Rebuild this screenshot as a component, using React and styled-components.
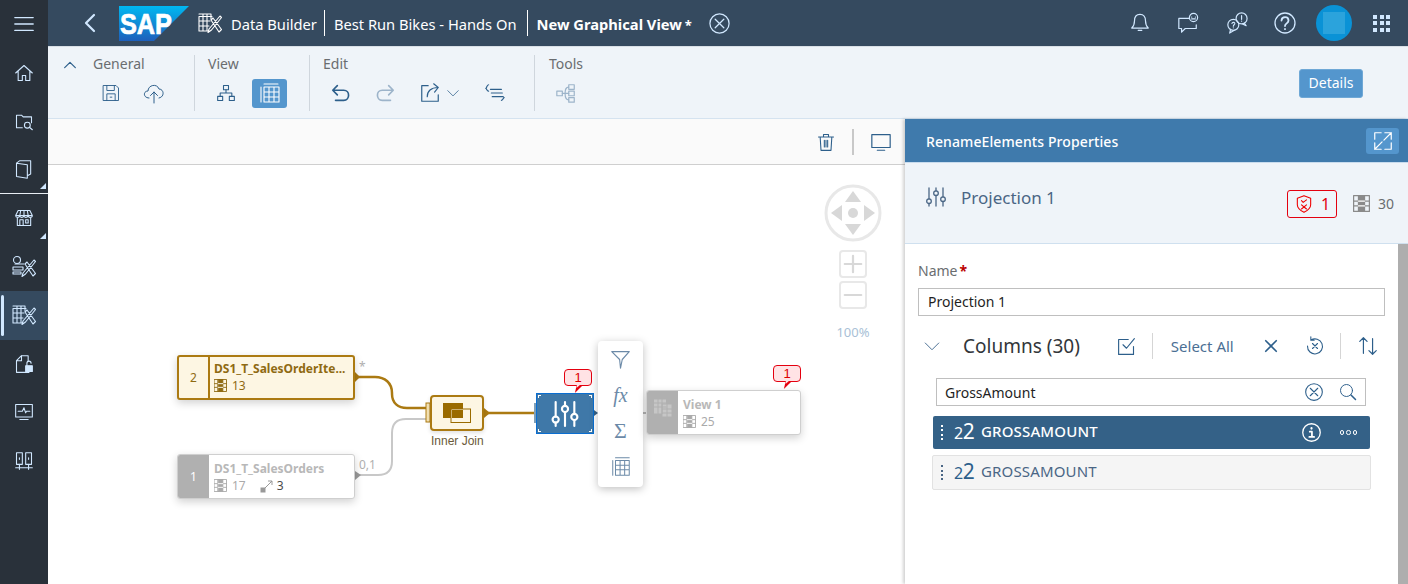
import React from 'react';
import styled, { createGlobalStyle } from 'styled-components';

const GlobalStyle = createGlobalStyle`
  html, body { margin: 0; padding: 0; height: 100%; overflow: hidden; }
  body { font-family: "Noto Sans", "Open Sans", sans-serif; background: #fff; }
  * { box-sizing: border-box; }
`;

const Svg = styled.svg`
  display: block;
  flex: none;
  width: ${(p) => p.$s || 20}px;
  height: ${(p) => p.$s || 20}px;
  fill: none;
  stroke: ${(p) => p.$c || 'currentColor'};
  stroke-width: ${(p) => p.$w || 1.3};
  stroke-linecap: round;
  stroke-linejoin: round;
`;

const I = ({ s, c, w, children }) => (
  <Svg viewBox="0 0 24 24" $s={s} $c={c} $w={w}>
    {children}
  </Svg>
);

const Film = ({ s = 14, c = '#7f7f7f' }) => (
  <Svg viewBox="0 0 14 14" $s={s} $c={c} $w={1}>
    <rect x="0.5" y="0.5" width="13" height="13" />
    <rect x="4.5" y="0.5" width="5" height="13" fill={c} />
    <path d="M.5 5H4.5M.5 9H4.5M9.5 5H13.5M9.5 9H13.5" />
    <path d="M4.5 5H9.5M4.5 9H9.5" stroke="#fff" />
  </Svg>
);

const toolsPath = 'M13 9l2-2 8.500 11.500-2.500 2.500zM22 5l1.500 1.500L13.500 19l-3.500 2.500 1-3.500z';

const TableTools = ({ s }) => (
  <I s={s} w={1.100}>
    <path d="M1 3h12M1 5.500h13M1 5.500V20h10M1 10h11M1 15h10M5 3v17M9 3v17M13 3v5" />
    <path d={toolsPath} />
  </I>
);

const Sliders = ({ s, c, w }) => (
  <I s={s} c={c} w={w}>
    <path d="M5 3v11M5 18.500V21M12 3v3M12 10.500V21M19 3v9M19 16.500V21" />
    <circle cx="5" cy="16.200" r="2.300" />
    <circle cx="12" cy="8.200" r="2.300" />
    <circle cx="19" cy="14.200" r="2.300" />
  </I>
);

const CloseCircle = ({ s, c }) => (
  <I s={s} c={c}>
    <circle cx="12" cy="12" r="10" />
    <path d="M7.500 7.500l9 9M16.500 7.500l-9 9" />
  </I>
);

const App = () => (
  <>
    <GlobalStyle />
    <Shell>
      <Sidebar>
        <SideItem><I s={22} w={1.500}><path d="M2 5h20M2 12h20M2 19h20" /></I></SideItem>
        <SideItem><I><path d="M2 12L12 3l10 9M5 10v11h5v-6h4v6h5V10" /></I></SideItem>
        <SideItem><I><path d="M10 20H3V5h6l2 2h10v7" /><circle cx="16" cy="17" r="3.500" /><path d="M18.500 19.500L22 22.500" /></I></SideItem>
        <SideItem $divider $corner>
          <I><path d="M3 5v16l13 2V7zM3 5l4-3h13v16l-4 2" /></I>
        </SideItem>
        <SideItem $corner>
          <I><path d="M5 3h14l3 6H2zM2 9c0 3 4 3 5 0 0 3 4 3 5 0 0 3 4 3 5 0 0 3 5 3 5 0M4 12v9h16v-9M7 14h4v7H7zM14 14h3v4h-3zM8 3L7 9M12 3v6M16 3l1 6" /></I>
        </SideItem>
        <SideItem>
          <I s={24} w={1.100}><circle cx="5" cy="5" r="3.500" /><path d="M1 12h10v3H1zM1 17h8v2H1zM3 9h9" /><path d={toolsPath} /></I>
        </SideItem>
        <SideItem $active><TableTools s={24} /></SideItem>
        <SideItem>
          <I><path d="M9 2h8v7M9 2L3 8v14h15M3 8h6V2" /><rect x="14" y="14" width="8" height="7" fill="#d1e8ff" /><path d="M15.500 14v-3a2.500 2.500 0 0 1 5 0" /></I>
        </SideItem>
        <SideItem>
          <I><rect x="2" y="3" width="20" height="15" /><path d="M5 11h5l2-4 2 6 1-2h4M7 21h10" /></I>
        </SideItem>
        <SideItem>
          <I><rect x="3" y="2" width="7" height="14" /><rect x="14" y="2" width="7" height="14" /><path d="M6.500 16v6M17.500 16v6M2 20h20M6.500 8v2M17.500 8v2" /></I>
        </SideItem>
      </Sidebar>

      <Main>
        <Shellbar>
          <BackBtn><I s={24} w={2.200}><path d="M15 4l-8 8 8 8" /></I></BackBtn>
          <SapLogo viewBox="0 0 70 35">
            <defs>
              <linearGradient id="sapg" x1="0" y1="0" x2="0" y2="1">
                <stop offset="0" stopColor="#00b8f1" />
                <stop offset="1" stopColor="#1e5fbb" />
              </linearGradient>
            </defs>
            <polygon points="0,0 70,0 35,35 0,35" fill="url(#sapg)" />
            <text x="1" y="28" fill="#fff" stroke="#fff" strokeWidth="0.700" fontFamily="Liberation Sans" fontWeight="700" fontSize="29" textLength="52" lengthAdjust="spacingAndGlyphs">SAP</text>
          </SapLogo>
          <Crumbs>
            <TableTools s={24} />
            <Crumb $pad="0 7px 0 9px">Data Builder</Crumb>
            <CrumbBar />
            <Crumb $pad="0 10px 0 9px">Best Run Bikes - Hands On</Crumb>
            <CrumbBar />
            <Crumb $bold $pad="0 0 0 9px">New Graphical View<Star>*</Star></Crumb>
            <CloseSlot><CloseCircle s={23} /></CloseSlot>
          </Crumbs>
          <ShellRight>
            <ShellBtn><I s={22}><path d="M12 2.500c-4 0-6 3-6 7 0 4-1 6-3 8h18c-2-2-3-4-3-8 0-4-2-7-6-7zM10 20h4" /></I></ShellBtn>
            <ShellBtn><I s={22}><path d="M13 7H2v11h3v4l4-4h12v-4" /><circle cx="18" cy="6" r="4.500" /><path d="M16 5.500h.1M20 5.500h.1M16 7.500h4" /></I></ShellBtn>
            <ShellBtn>
              <I s={22}>
                <circle cx="8" cy="14" r="6" />
                <path d="M5 19l-1 4 5-3M6.500 12.500c.5-2 3.500-1.500 3 .5-.3 1-1.500 1-1.500 2.500M8 17.200v.1" />
                <circle cx="17" cy="7" r="6" />
                <path d="M20 12l2 3-4-2M17 4v4M17 10v.1" />
              </I>
            </ShellBtn>
            <ShellBtn><I s={24}><circle cx="12" cy="12" r="10" /><path d="M8.500 9.500c.3-4.500 7-4.500 7 0 0 3-3.500 2.700-3.500 5.500M12 18v.2" strokeWidth="1.800" /></I></ShellBtn>
            <Avatar><AvatarInner /></Avatar>
            <ShellBtn>
              <Dots>{Array.from({ length: 9 }).map((_, i) => <b key={i} />)}</Dots>
            </ShellBtn>
          </ShellRight>
        </Shellbar>

        <Toolbar>
          <Collapse><I s={16} w={1.800} c="#2d5f8b"><path d="M4 16l8-8 8 8" /></I></Collapse>
          <Group $w={147} $pl={45}>
            <GroupLabel>General</GroupLabel>
            <ToolRow>
              <Slot $l={8}><I s={20} w={1.100}><path d="M3 3h15l3 3v15H3zM7 3v6h9V3M7 21v-8h10v8M11 17h2" /></I></Slot>
              <Slot $l={21}><I s={24} w={1}><path d="M7 17c-6 0-6-7-1-7 0-6 9-8 11-2 5 0 6 8 0 9M12 22V11M8.500 14.500L12 11l3.500 3.500" /></I></Slot>
            </ToolRow>
          </Group>
          <Group $w={115}>
            <GroupLabel>View</GroupLabel>
            <ToolRow>
              <Slot $l={8}><I s={20}><rect x="9" y="3" width="6" height="5" /><rect x="2" y="16" width="6" height="5" /><rect x="16" y="16" width="6" height="5" /><path d="M12 8v4M5 16v-4h14v4" /></I></Slot>
              <ActiveTool><I s={24} c="#fff" w={1.100}><path d="M6 3h14M6 6h15v15H6zM11 6v15M16 6v15M6 11h15M6 16h15M3 6v15" /></I></ActiveTool>
            </ToolRow>
          </Group>
          <Group $w={225}>
            <GroupLabel>Edit</GroupLabel>
            <ToolRow>
              <Slot $l={7}><I s={22} w={1.800}><path d="M8 4L3 9l5 5M3 9h12c7 0 7 11 0 11H6" /></I></Slot>
              <Slot $l={22} $muted><I s={22} w={1.800}><path d="M16 4l5 5-5 5M21 9H9c-7 0-7 11 0 11h9" /></I></Slot>
              <Slot $l={23}><I s={22}><path d="M10 4H3v17h18v-7M9 16c0-6 4-10 12-10M16 2l5 4-4 5" /></I></Slot>
              <Slot $l={5}><I s={14}><path d="M3 8l9 9 9-9" /></I></Slot>
              <Slot $l={24}><I s={22}><path d="M7 8h12M8 12h12M9 16h12M5 3C3 3 3 7 2 7c1 0 1 3 3 3M19 20c2 0 2-3 3-3" /></I></Slot>
            </ToolRow>
          </Group>
          <Group $last $pl={14}>
            <GroupLabel>Tools</GroupLabel>
            <ToolRow>
              <Slot $l={6} $muted><I s={22}><rect x="2" y="10" width="6" height="5" /><rect x="15" y="3" width="6" height="5" /><rect x="15" y="10" width="6" height="5" /><rect x="15" y="17" width="6" height="5" /><path d="M8 12.500h7M11 12.500c0-5 1-7 4-7M11 12.500c0 5 1 7 4 7" /></I></Slot>
            </ToolRow>
          </Group>
          <DetailsBtn>Details</DetailsBtn>
        </Toolbar>

        <Work>
          <CanvasCol>
            <CanvasBar>
              <I s={20}><path d="M3 6h18M9 6V3h6v3M5 6l1 16h12l1-16M10 10v8M14 10v8M12 10v8" /></I>
              <BarSep />
              <I s={22}><rect x="2" y="4" width="20" height="14" /><path d="M8 21h8" /></I>
            </CanvasBar>
            <Canvas>
              <Edges viewBox="0 0 854 420">
                <g transform="translate(-48 -165)">
                  <path d="M355 475h23c9 0 14-5 14-14v-28c0-9 5-14 14-14h24" stroke="#c8c8c8" strokeWidth="2" fill="none" />
                  <path d="M355 377h20c10 0 17 6 17 16v1c0 9 6 14 15 14h23" stroke="#ab7a12" strokeWidth="2.500" fill="none" />
                  <path d="M484 413h52" stroke="#ab7a12" strokeWidth="2.500" fill="none" />
                  <path d="M642 413h6" stroke="#bbb" strokeWidth="2" fill="none" />
                  <path d="M355 372l5 5-5 5z" fill="#ab7a12" />
                  <path d="M355 471l6 4-6 5z" fill="#999" />
                  <path d="M484 408l6 5-6 5z" fill="#ab7a12" />
                  <path d="M594 410l4 3-4 3z" fill="#346187" />
                  <rect x="426" y="403" width="4" height="19" fill="#f6e4b5" stroke="#ab7a12" />
                  <rect x="534" y="403" width="2" height="20" fill="#7f9fb8" />
                </g>
              </Edges>

              <EdgeLabel $x={311} $y={195}>*</EdgeLabel>
              <EdgeLabel $x={311} $y={293}>0,1</EdgeLabel>

              <Nav>
                <svg width="60" height="60" viewBox="0 0 60 60">
                  <circle cx="30" cy="30" r="27" fill="#fff" stroke="#e8e8e8" strokeWidth="3" />
                  <circle cx="30" cy="30" r="5" fill="#d8d8d8" />
                  <path d="M30 8l8 11H22zM30 52l-8-11h16zM8 30l11-8v16zM52 30l-11-8v16z" fill="#d8d8d8" />
                </svg>
                <ZoomBtn><I s={22} c="#d8d8d8" w={2.400}><path d="M12 3v18M3 12h18" /></I></ZoomBtn>
                <ZoomBtn><I s={22} c="#d8d8d8" w={2.400}><path d="M3 12h18" /></I></ZoomBtn>
                <ZoomText>100%</ZoomText>
              </Nav>

              <TableNode $x={129} $y={190} $w={178} $on>
                <NodeNum $on>2</NodeNum>
                <NodeBody $on>
                  <NodeTitle $on>DS1_T_SalesOrderIte...</NodeTitle>
                  <NodeMeta $on><Film s={13} c="#8f6a12" />13</NodeMeta>
                </NodeBody>
              </TableNode>

              <TableNode $x={129} $y={289} $w={178}>
                <NodeNum>1</NodeNum>
                <NodeBody>
                  <NodeTitle>DS1_T_SalesOrders</NodeTitle>
                  <NodeMeta>
                    <Film s={13} c="#aaa" />17
                    <LinkIcon>
                      <svg width="14" height="14" viewBox="0 0 14 14" fill="none" stroke="#999">
                        <path d="M3 11L12 2M8 2h4v4" />
                        <rect x="1" y="9" width="4" height="4" fill="#999" />
                      </svg>
                    </LinkIcon>
                    <Dark>3</Dark>
                  </NodeMeta>
                </NodeBody>
              </TableNode>

              <JoinNode>
                <svg width="28" height="20" viewBox="0 0 28 20">
                  <rect x="0" y="0" width="20" height="15" fill="#9a6b00" />
                  <rect x="8" y="6" width="19.500" height="13.500" fill="#fdf6e3" stroke="#9a6b00" />
                  <rect x="9" y="7" width="11" height="8" fill="#9a6b00" />
                </svg>
              </JoinNode>
              <JoinLabel>Inner Join</JoinLabel>

              <ProjectionNode>
                <Sliders s={32} c="#fff" w={1.600} />
                <Tick $t="top:1px;left:1px;border-width:1px 0 0 1px" />
                <Tick $t="top:1px;right:1px;border-width:1px 1px 0 0" />
                <Tick $t="bottom:1px;left:1px;border-width:0 0 1px 1px" />
                <Tick $t="bottom:1px;right:1px;border-width:0 1px 1px 0" />
              </ProjectionNode>
              <Callout $x={516} $y={204}>1</Callout>

              <Popup>
                <I s={21} c="#6c8aa8"><path d="M2 3h20l-8 9-2 10-1-10z" /></I>
                <FxText>fx</FxText>
                <SigmaText>Σ</SigmaText>
                <I s={22} c="#6c8aa8" w={1.100}><path d="M6 2h15M6 5h15v16H6zM11 5v16M16 5v16M6 10h15M6 15h15M3 5v16" /></I>
              </Popup>

              <TableNode $x={598} $y={225} $w={155} $view>
                <NodeNum $view>
                  <svg width="20" height="20" viewBox="0 0 20 20" fill="#c6c6c6" stroke="#b0b0b0">
                    <rect x="0.500" y="2" width="13" height="15" />
                    <rect x="9" y="7" width="10" height="13" />
                    <path d="M.5 6h13M.5 10h13M5 2v15M9 2v15M9 12h10M9 16h10M14 7v13" />
                  </svg>
                </NodeNum>
                <NodeBody $view>
                  <NodeTitle>View 1</NodeTitle>
                  <NodeMeta><Film s={13} c="#aaa" />25</NodeMeta>
                </NodeBody>
              </TableNode>
              <Callout $x={725} $y={200}>1</Callout>
            </Canvas>
          </CanvasCol>

          <Panel>
            <PanelHead>
              RenameElements Properties
              <ExpandBtn><I s={22} c="#fff"><path d="M14 3h7v7M21 3l-8 8M3 14v7h7M3 21l8-8M3 10V3h7M14 21h7v-7" /></I></ExpandBtn>
            </PanelHead>
            <PanelInfo>
              <PanelIcon><Sliders s={24} c="#4a6685" /></PanelIcon>
              <PanelTitle>Projection 1</PanelTitle>
              <ErrorBadge>
                <I s={20} c="#e00"><path d="M12 2l8 3v8c0 4-4 7-8 9-4-2-8-5-8-9V5zM9 8l2 2 4-3M9 13l6 5M15 13l-6 5" /></I>
                1
              </ErrorBadge>
              <Count><Film s={17} c="#8a8a8a" />30</Count>
            </PanelInfo>
            <PanelBody>
              <PanelScroll>
                <FieldLabel>Name<Req>*</Req></FieldLabel>
                <TextBox>Projection 1</TextBox>
                <ColumnsHead>
                  <HeadChevron><I s={18} c="#4a6f94"><path d="M3 8l9 9 9-9" /></I></HeadChevron>
                  <ColumnsTitle>Columns (30)</ColumnsTitle>
                  <HeadTools>
                    <I s={21} c="#2d5f8b"><path d="M14 4H3v17h17v-9M8 10l4 4 9-11" /></I>
                    <HeadSep />
                    <SelectAll>Select All</SelectAll>
                    <XSlot><I s={18} c="#2d5f8b" w={2.200}><path d="M5 5l14 14M19 5L5 19" /></I></XSlot>
                    <ResetSlot><I s={20} c="#2d5f8b"><path d="M7 5a9 9 0 1 1-4 7M7 1v4h4M9 9l6 6M15 9l-6 6" /></I></ResetSlot>
                    <HeadSep />
                    <SortSlot><I s={22} c="#2d5f8b"><path d="M7 20V3M3 7l4-4 4 4M17 4v17M13 17l4 4 4-4" /></I></SortSlot>
                  </HeadTools>
                </ColumnsHead>
                <SearchBox>
                  <span>GrossAmount</span>
                  <SearchIcons>
                    <CloseCircle s={20} c="#2d5f8b" />
                    <I s={18} c="#2d5f8b"><circle cx="10" cy="10" r="8" /><path d="M16 16l6 6" strokeWidth="2" /></I>
                  </SearchIcons>
                </SearchBox>
                <ColumnRow $selected>
                  <Grip $selected />
                  <TypeIcon $selected><small>2</small>2</TypeIcon>
                  <ColumnName $selected>GROSSAMOUNT</ColumnName>
                  <RowEnd>
                    <I s={21} c="#fff" w={1.500}><circle cx="12" cy="12" r="10" /><path d="M10 11h2.500v6M9.500 17h5.500" strokeWidth="2" /><path d="M12 7v.5" strokeWidth="2.500" /></I>
                    <MoreDots><b /><b /><b /></MoreDots>
                  </RowEnd>
                </ColumnRow>
                <ColumnRow>
                  <Grip />
                  <TypeIcon><small>2</small>2</TypeIcon>
                  <ColumnName>GROSSAMOUNT</ColumnName>
                </ColumnRow>
              </PanelScroll>
              <ScrollThumb />
            </PanelBody>
          </Panel>
        </Work>
      </Main>
    </Shell>
  </>
);

export default App;

const Shell = styled.div`
  display: flex;
  width: 1408px;
  height: 584px;
  overflow: hidden;
`;

const Sidebar = styled.nav`
  flex: none;
  width: 48px;
  background: #29313a;
  color: #d1e8ff;
`;

const SideItem = styled.div`
  position: relative;
  height: 48.5px;
  display: flex;
  align-items: center;
  justify-content: center;
  background: ${(p) => (p.$active ? '#354a5f' : 'transparent')};
  border-bottom: ${(p) => (p.$divider ? '1px solid #e8eef4' : '0')};

  ${(p) =>
    p.$active &&
    `&::before {
      content: '';
      position: absolute;
      left: 1px;
      top: 4px;
      bottom: 4px;
      width: 3px;
      border-radius: 2px;
      background: #d1e8ff;
    }`}

  ${(p) =>
    p.$corner &&
    `&::after {
      content: '';
      position: absolute;
      right: 2px;
      bottom: 4px;
      border-left: 6px solid transparent;
      border-bottom: 6px solid #d1e8ff;
    }`}
`;

const Main = styled.div`
  flex: 1;
  min-width: 0;
  display: flex;
  flex-direction: column;
`;

const Shellbar = styled.header`
  flex: none;
  height: 47px;
  display: flex;
  align-items: center;
  background: #354a5f;
  border-bottom: 1px solid #d9e0e6;
  color: #fff;
  padding-left: 31px;
`;

const BackBtn = styled.div`
  width: 24px;
  color: #d1e8ff;
  margin-right: 16px;
`;

const SapLogo = styled.svg`
  flex: none;
  width: 70px;
  height: 35px;
  margin-right: 9px;
`;

const Crumbs = styled.div`
  display: flex;
  align-items: center;
  color: #fff;
`;

const Crumb = styled.span`
  font-size: 14.700px;
  margin-top: 1px;
  font-weight: ${(p) => (p.$bold ? 700 : 400)};
  padding: ${(p) => p.$pad || 0};
  white-space: nowrap;
`;

const Star = styled.span`
  margin-left: 3px;
  font-size: 13px;
`;

const CrumbBar = styled.i`
  width: 1px;
  height: 26px;
  background: #fff;
`;

const CloseSlot = styled.div`
  margin-left: 16px;
  color: #d1e8ff;
`;

const ShellRight = styled.div`
  margin-left: auto;
  display: flex;
  align-items: center;
  color: #d1e8ff;
  padding-right: 2px;
`;

const ShellBtn = styled.div`
  width: 48.500px;
  display: flex;
  justify-content: center;
`;

const Avatar = styled.div`
  width: 36px;
  height: 36px;
  margin: 0 6px;
  border-radius: 50%;
  background: #0a92d6;
  display: flex;
  align-items: center;
  justify-content: center;
`;

const AvatarInner = styled.div`
  width: 22px;
  height: 22px;
  background: #2ba3dc;
`;

const Dots = styled.div`
  display: grid;
  grid-template-columns: repeat(3, 4px);
  grid-auto-rows: 4px;
  gap: 2.500px;

  b {
    background: #d1e8ff;
    display: block;
  }
`;

const Toolbar = styled.section`
  flex: none;
  position: relative;
  height: 72px;
  display: flex;
  align-items: center;
  background: #eff4f9;
  border-bottom: 1px solid #d5e3f0;
  color: #2d5f8b;
`;

const Collapse = styled.div`
  position: absolute;
  left: 14px;
  top: 10px;
`;

const Group = styled.div`
  flex: none;
  width: ${(p) => (p.$w ? `${p.$w}px` : 'auto')};
  height: 56px;
  padding-left: ${(p) => p.$pl || 13}px;
  display: flex;
  flex-direction: column;
  justify-content: space-between;
  border-right: ${(p) => (p.$last ? '0' : '1px solid #cfd6dd')};
`;

const GroupLabel = styled.div`
  font-size: 14px;
  line-height: 18px;
  color: #6a6d70;
`;

const ToolRow = styled.div`
  display: flex;
  align-items: center;
  height: 29px;
  margin-bottom: 3px;
`;

const Slot = styled.div`
  margin-left: ${(p) => p.$l || 0}px;
  color: ${(p) => (p.$muted ? '#9db4ca' : '#2d5f8b')};
`;

const ActiveTool = styled.div`
  width: 35px;
  height: 29px;
  margin-left: 16px;
  border-radius: 3px;
  background: #5496cd;
  display: flex;
  align-items: center;
  justify-content: center;
`;

const DetailsBtn = styled.button`
  position: absolute;
  left: 1251px;
  top: 22px;
  width: 64px;
  height: 29px;
  border: 1px solid #6fa8d6;
  border-radius: 3px;
  background: #5496cd;
  color: #fff;
  font: 14px/24px "Noto Sans", sans-serif;
  padding: 0 0 2px;
`;

const Work = styled.div`
  flex: 1;
  min-height: 0;
  display: flex;
`;

const CanvasCol = styled.div`
  flex: 1;
  min-width: 0;
  display: flex;
  flex-direction: column;
`;

const CanvasBar = styled.div`
  flex: none;
  height: 46px;
  display: flex;
  align-items: center;
  justify-content: flex-end;
  padding-right: 13px;
  background: #fafafa;
  border-bottom: 1px solid #cfcfcf;
  color: #2d5f8b;
`;

const BarSep = styled.i`
  width: 2px;
  height: 26px;
  margin: 0 16px;
  background: #c8c8c8;
`;

const Canvas = styled.div`
  position: relative;
  flex: 1;
  background: #fff;
`;

const Edges = styled.svg`
  position: absolute;
  left: 0;
  top: 0;
  width: 854px;
  height: 420px;
`;

const EdgeLabel = styled.span`
  position: absolute;
  left: ${(p) => p.$x}px;
  top: ${(p) => p.$y}px;
  font-size: 12px;
  line-height: 14px;
  color: #b0b0b0;
`;

const Nav = styled.div`
  position: absolute;
  left: 775px;
  top: 18px;
  width: 60px;
  display: flex;
  flex-direction: column;
  align-items: center;
`;

const ZoomBtn = styled.div`
  width: 28px;
  height: 28px;
  margin-top: 3px;
  border: 2px solid #e8e8e8;
  border-radius: 4px;
  display: flex;
  align-items: center;
  justify-content: center;

  &:nth-child(2) {
    margin-top: 7px;
  }
`;

const ZoomText = styled.div`
  margin-top: 14px;
  font-size: 13px;
  color: #a9bfd6;
`;

const TableNode = styled.div`
  position: absolute;
  left: ${(p) => p.$x}px;
  top: ${(p) => p.$y}px;
  width: ${(p) => p.$w}px;
  height: 45px;
  display: flex;
  border-radius: 3px;
  overflow: hidden;
  background: ${(p) => (p.$on ? '#fdf6e3' : '#fff')};
  border: ${(p) => (p.$on ? '2px solid #ab7a12' : '1px solid #cfcfcf')};
  box-shadow: 0 3px 8px rgba(0, 0, 0, 0.18);
`;

const NodeNum = styled.div`
  flex: none;
  width: 31px;
  display: flex;
  align-items: ${(p) => (p.$view ? 'flex-start' : 'center')};
  justify-content: center;
  padding-top: ${(p) => (p.$view ? '6px' : '0')};
  font-size: 12px;
  background: ${(p) => (p.$on ? 'transparent' : '#b0b0b0')};
  color: ${(p) => (p.$on ? '#8f6a12' : '#fff')};
  border-right: ${(p) => (p.$on ? '2px solid #ab7a12' : '0')};
`;

const NodeBody = styled.div`
  flex: 1;
  min-width: 0;
  padding: ${(p) => (p.$on ? '4px 0 0 4px' : '6px 0 0 5px')};
`;

const NodeTitle = styled.div`
  font-size: 12px;
  line-height: 16px;
  font-weight: 700;
  white-space: nowrap;
  color: ${(p) => (p.$on ? '#8f6a12' : '#b8b8b8')};
`;

const NodeMeta = styled.div`
  display: flex;
  align-items: center;
  gap: 5px;
  height: 17px;
  font-size: 12px;
  color: ${(p) => (p.$on ? '#8f6a12' : '#aaa')};
`;

const LinkIcon = styled.span`
  display: block;
  margin-left: 9px;
  height: 14px;
`;

const Dark = styled.span`
  color: #4a4a4a;
  margin-left: -2px;
`;

const JoinNode = styled.div`
  position: absolute;
  left: 382px;
  top: 230px;
  width: 54px;
  height: 36px;
  border: 2px solid #ab7a12;
  border-radius: 4px;
  background: #fdf6e3;
  display: flex;
  align-items: center;
  justify-content: center;
  box-shadow: 0 2px 4px rgba(0, 0, 0, 0.12);
`;

const JoinLabel = styled.div`
  position: absolute;
  left: 383px;
  top: 269px;
  font-family: "Liberation Sans", sans-serif;
  font-size: 12px;
  line-height: 14px;
  color: #6b5a3a;
`;

const ProjectionNode = styled.div`
  position: absolute;
  left: 488px;
  top: 228px;
  width: 58px;
  height: 41px;
  background: #3f78a8;
  border: 1px solid #0a6ed1;
  display: flex;
  align-items: center;
  justify-content: center;
`;

const Tick = styled.i`
  position: absolute;
  width: 3px;
  height: 3px;
  border: 0 solid #fff;
  ${(p) => p.$t};
`;

const Callout = styled.div`
  position: absolute;
  left: ${(p) => p.$x}px;
  top: ${(p) => p.$y}px;
  width: 28px;
  height: 17px;
  border: 1px solid #e4000f;
  border-radius: 4px;
  background: #ffe3e5;
  color: #d00;
  font: 13px/15px "Liberation Sans", sans-serif;
  text-align: center;

  &::after {
    content: '';
    position: absolute;
    left: 9px;
    bottom: -8px;
    width: 9px;
    height: 8px;
    background: #e4000f;
    clip-path: polygon(10% 100%, 100% 0, 30% 0);
  }

  &::before {
    content: '';
    position: absolute;
    z-index: 1;
    left: 11px;
    bottom: -3px;
    width: 5px;
    height: 4px;
    background: #ffe3e5;
    clip-path: polygon(10% 100%, 100% 0, 20% 0);
  }
`;

const Popup = styled.div`
  position: absolute;
  left: 550px;
  top: 176px;
  width: 45px;
  height: 146px;
  padding: 8px 0 9px;
  border-radius: 4px;
  background: #fff;
  box-shadow: 0 2px 8px rgba(0, 0, 0, 0.25);
  display: flex;
  flex-direction: column;
  align-items: center;
  justify-content: space-between;
`;

const FxText = styled.span`
  font: italic 20px/24px "Liberation Serif", serif;
  color: #6c8aa8;
`;

const SigmaText = styled.span`
  font: 22px/24px "Liberation Serif", serif;
  color: #6c8aa8;
`;

const Panel = styled.aside`
  flex: none;
  width: 503px;
  display: flex;
  flex-direction: column;
  position: relative;
  box-shadow: -2px 0 3px rgba(0, 0, 0, 0.18);
`;

const PanelHead = styled.div`
  flex: none;
  height: 44px;
  display: flex;
  align-items: center;
  justify-content: space-between;
  padding: 1px 9px 0 21px;
  background: #3f7aac;
  border-bottom: 1px solid #c9dcee;
  color: #fff;
  font-size: 14px;
  font-weight: 500;
  letter-spacing: 0.1px;
`;

const ExpandBtn = styled.div`
  width: 33px;
  height: 26px;
  background: #5496cd;
  border-radius: 3px;
  display: flex;
  align-items: center;
  justify-content: center;
`;

const PanelInfo = styled.div`
  flex: none;
  height: 81px;
  display: flex;
  align-items: center;
  padding: 0 14px 0 19px;
  background: #eff4f9;
  border-bottom: 1px solid #cfe0ef;
`;

const PanelIcon = styled.div`
  margin-top: -12px;
`;

const PanelTitle = styled.div`
  flex: 1;
  font-size: 17px;
  color: #4a6685;
  margin: -10px 0 0 13px;
  line-height: 24px;
`;

const ErrorBadge = styled.div`
  width: 50px;
  height: 28px;
  display: flex;
  align-items: center;
  justify-content: center;
  gap: 7px;
  border: 1px solid #e4000f;
  border-radius: 3px;
  color: #e4000f;
  font-size: 16px;
  margin: 2px 16px 0 0;
`;

const Count = styled.div`
  display: flex;
  align-items: center;
  gap: 8px;
  color: #6a6d70;
  font-size: 14px;
`;

const PanelBody = styled.div`
  flex: 1;
  min-height: 0;
  display: flex;
`;

const PanelScroll = styled.div`
  flex: 1;
  padding: 17px 13px 0;
`;

const ScrollThumb = styled.div`
  flex: none;
  width: 10px;
  background: #aeaeae;
`;

const FieldLabel = styled.div`
  font-size: 14px;
  line-height: 20px;
  color: #6a6d70;
`;

const Req = styled.span`
  color: #bb0000;
  font-weight: 700;
  margin-left: 2px;
`;

const TextBox = styled.div`
  height: 28px;
  margin-top: 7px;
  padding: 0 9px;
  border: 1px solid #bfbfbf;
  font-size: 14px;
  line-height: 26px;
  color: #1f1f1f;
`;

const ColumnsHead = styled.div`
  height: 34px;
  margin-top: 13px;
  display: flex;
  align-items: center;
`;

const HeadChevron = styled.div`
  margin-left: 5px;
  width: 40px;
`;

const ColumnsTitle = styled.div`
  font-size: 19px;
  color: #32363a;
  white-space: nowrap;
`;

const HeadTools = styled.div`
  margin-left: 36px;
  display: flex;
  align-items: center;
`;

const HeadSep = styled.i`
  width: 1px;
  height: 26px;
  margin: 0 0 0 15px;
  background: #d5d5d5;
`;

const SelectAll = styled.span`
  margin-left: 18px;
  font-size: 15px;
  color: #4b6f94;
  white-space: nowrap;
`;

const XSlot = styled.div`
  margin-left: 28px;
`;

const ResetSlot = styled.div`
  margin-left: 25px;
`;

const SortSlot = styled.div`
  margin-left: 16px;
`;

const SearchBox = styled.div`
  height: 28px;
  margin: 15px 19px 0 18px;
  padding: 0 8px;
  border: 1px solid #bfbfbf;
  display: flex;
  align-items: center;
  justify-content: space-between;
  font-size: 14px;
  color: #1f1f1f;
`;

const SearchIcons = styled.div`
  display: flex;
  align-items: center;
  gap: 15px;
`;

const ColumnRow = styled.div`
  height: ${(p) => (p.$selected ? '33px' : '35px')};
  margin: ${(p) => (p.$selected ? '10px 15px 6px 15px' : '0 14px 0 14px')};
  display: flex;
  align-items: center;
  padding-left: 8px;
  background: ${(p) => (p.$selected ? '#346187' : '#f5f5f5')};
  border: ${(p) => (p.$selected ? '0' : '1px solid #e2e2e2')};
  border-radius: 2px;
`;

const Grip = styled.i`
  width: 2px;
  height: 15px;
  margin-right: 11px;
  background: repeating-linear-gradient(
    to bottom,
    ${(p) => (p.$selected ? '#fff' : '#4a6685')} 0 2px,
    transparent 2px 4.500px
  );
`;

const TypeIcon = styled.span`
  font-size: 21px;
  line-height: 20px;
  width: 27px;
  margin-top: -2px;
  letter-spacing: -0.5px;
  color: ${(p) => (p.$selected ? '#fff' : '#2d5f8b')};

  small {
    font-size: 16px;
  }
`;

const ColumnName = styled.span`
  font-size: 15px;
  line-height: 20px;
  margin-top: -3px;
  letter-spacing: 0.15px;
  font-weight: ${(p) => (p.$selected ? 500 : 400)};
  color: ${(p) => (p.$selected ? '#fff' : '#4a6685')};
`;

const RowEnd = styled.div`
  margin-left: auto;
  display: flex;
  align-items: center;
  gap: 18px;
  padding-right: 13px;
`;

const MoreDots = styled.div`
  display: flex;
  gap: 2px;

  b {
    width: 4.500px;
    height: 4.500px;
    border-radius: 50%;
    border: 1px solid #fff;
  }
`;
